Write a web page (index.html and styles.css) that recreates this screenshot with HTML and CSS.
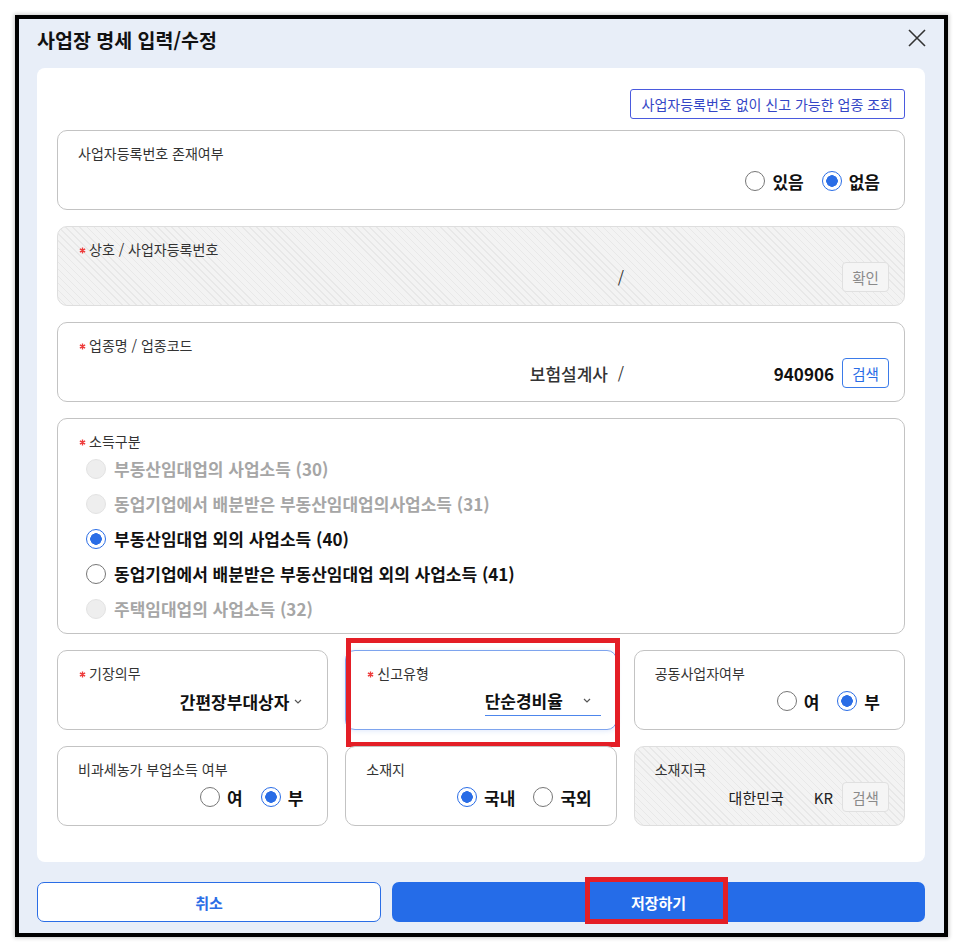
FILE: index.html
```html
<!DOCTYPE html>
<html lang="ko">
<head>
<meta charset="utf-8">
<title>사업장 명세 입력/수정</title>
<link rel="stylesheet" href="styles.css">
</head>
<body>
<div class="modal">
  <header class="modal-head">
    <h1 class="modal-title">사업장 명세 입력/수정</h1>
    <button class="close-btn" type="button" aria-label="닫기">
      <svg width="18" height="18" viewBox="0 0 18 18"><path d="M1 1 L17 17 M17 1 L1 17" stroke="#333" stroke-width="1.6" fill="none"/></svg>
    </button>
  </header>

  <main class="panel">
    <div class="panel-top">
      <button class="link-btn" type="button">사업자등록번호 없이 신고 가능한 업종 조회</button>
    </div>

    <section class="field">
      <div class="field-label">사업자등록번호 존재여부</div>
      <div class="field-value">
        <label class="radio"><span class="dot"></span><span>있음</span></label>
        <label class="radio is-checked"><span class="dot"></span><span>없음</span></label>
      </div>
    </section>

    <section class="field is-disabled">
      <div class="field-label"><svg class="req" viewBox="0 0 8 8"><path d="M4 0.5 V7.5 M1 2.2 L7 5.8 M7 2.2 L1 5.8" stroke="#ee3b3b" stroke-width="1.5"/></svg>상호 / 사업자등록번호</div>
      <div class="field-value code-row">
        <span class="code-name"></span>
        <span class="code-slash">/</span>
        <span class="code-num"></span>
        <button class="mini-btn is-muted" type="button">확인</button>
      </div>
    </section>

    <section class="field">
      <div class="field-label"><svg class="req" viewBox="0 0 8 8"><path d="M4 0.5 V7.5 M1 2.2 L7 5.8 M7 2.2 L1 5.8" stroke="#ee3b3b" stroke-width="1.5"/></svg>업종명 / 업종코드</div>
      <div class="field-value code-row">
        <span class="code-name">보험설계사</span>
        <span class="code-slash">/</span>
        <span class="code-num">940906</span>
        <button class="mini-btn" type="button">검색</button>
      </div>
    </section>

    <section class="field field-list">
      <div class="field-label"><svg class="req" viewBox="0 0 8 8"><path d="M4 0.5 V7.5 M1 2.2 L7 5.8 M7 2.2 L1 5.8" stroke="#ee3b3b" stroke-width="1.5"/></svg>소득구분</div>
      <ul class="option-list">
        <li class="option is-off"><span class="dot"></span>부동산임대업의 사업소득 (30)</li>
        <li class="option is-off"><span class="dot"></span>동업기업에서 배분받은 부동산임대업의사업소득 (31)</li>
        <li class="option is-checked"><span class="dot"></span>부동산임대업 외의 사업소득 (40)</li>
        <li class="option"><span class="dot"></span>동업기업에서 배분받은 부동산임대업 외의 사업소득 (41)</li>
        <li class="option is-off"><span class="dot"></span>주택임대업의 사업소득 (32)</li>
      </ul>
    </section>

    <div class="field-grid">
      <section class="field">
        <div class="field-label"><svg class="req" viewBox="0 0 8 8"><path d="M4 0.5 V7.5 M1 2.2 L7 5.8 M7 2.2 L1 5.8" stroke="#ee3b3b" stroke-width="1.5"/></svg>기장의무</div>
        <div class="field-value">
          <span class="select">간편장부대상자<svg class="chev" viewBox="0 0 8 5"><path d="M1 1 L4 4 L7 1" stroke="#555" stroke-width="1.2" fill="none"/></svg></span>
        </div>
      </section>

      <section class="field is-focused">
        <div class="field-label"><svg class="req" viewBox="0 0 8 8"><path d="M4 0.5 V7.5 M1 2.2 L7 5.8 M7 2.2 L1 5.8" stroke="#ee3b3b" stroke-width="1.5"/></svg>신고유형</div>
        <div class="field-value">
          <span class="select is-open">단순경비율<svg class="chev" viewBox="0 0 8 5"><path d="M1 1 L4 4 L7 1" stroke="#555" stroke-width="1.2" fill="none"/></svg></span>
        </div>
        <span class="mark mark-type"></span>
      </section>

      <section class="field">
        <div class="field-label">공동사업자여부</div>
        <div class="field-value">
          <label class="radio"><span class="dot"></span><span>여</span></label>
          <label class="radio is-checked"><span class="dot"></span><span>부</span></label>
        </div>
      </section>

      <section class="field">
        <div class="field-label">비과세농가 부업소득 여부</div>
        <div class="field-value">
          <label class="radio"><span class="dot"></span><span>여</span></label>
          <label class="radio is-checked"><span class="dot"></span><span>부</span></label>
        </div>
      </section>

      <section class="field">
        <div class="field-label">소재지</div>
        <div class="field-value">
          <label class="radio is-checked"><span class="dot"></span><span>국내</span></label>
          <label class="radio"><span class="dot"></span><span>국외</span></label>
        </div>
      </section>

      <section class="field is-disabled">
        <div class="field-label">소재지국</div>
        <div class="field-value">
          <span class="country">대한민국</span>
          <span class="country-code">KR</span>
          <button class="mini-btn is-muted" type="button">검색</button>
        </div>
      </section>
    </div>
  </main>

  <footer class="modal-actions">
    <button class="btn btn-cancel" type="button">취소</button>
    <button class="btn btn-save" type="button">저장하기<span class="mark mark-save"></span></button>
  </footer>
</div>
</body>
</html>
```
FILE: styles.css
```css
* {
  box-sizing: border-box;
}

html,
body {
  margin: 0;
  padding: 0;
  background: #fff;
}

body {
  font-family: "Noto Sans CJK KR", "Noto Sans", sans-serif;
  color: #222;
}

button {
  font-family: inherit;
  cursor: pointer;
}

/* dialog frame */
.modal {
  margin: 15px;
  width: 933px;
  height: 922px;
  border: 4px solid #000;
  background: #e8eef8;
  display: flex;
  flex-direction: column;
  padding: 0 19px 11px 18px;
  box-shadow: 0 0 4px 1px rgba(0, 0, 0, 0.22);
}

.modal-head {
  height: 49px;
  flex: none;
  display: flex;
  align-items: center;
  justify-content: space-between;
  padding-bottom: 7px;
}

.modal-title {
  margin: 0;
  font-size: 19.5px;
  line-height: 26px;
  font-weight: 700;
  color: #111;
}

.close-btn {
  width: 24px;
  height: 24px;
  padding: 0;
  margin: -5px -4px 0 0;
  border: 0;
  background: transparent;
  display: flex;
  align-items: center;
  justify-content: center;
}

/* white content panel */
.panel {
  flex: 1;
  background: #fff;
  border-radius: 8px;
  padding: 21px 20px 36px;
}

.panel-top {
  display: flex;
  justify-content: flex-end;
}

.link-btn {
  height: 30px;
  padding: 0 11px;
  border: 1px solid #4a5ade;
  border-radius: 3px;
  background: #fff;
  color: #3446c6;
  font-size: 14px;
}

/* form field cards */
.field {
  position: relative;
  height: 80px;
  margin-top: 16px;
  padding: 12px 15px 0 20px;
  border: 1px solid #c3c3c3;
  border-radius: 10px;
  background: #fff;
}

.panel-top + .field {
  margin-top: 11px;
}

.field.is-disabled {
  border-color: #dedede;
  background: repeating-linear-gradient(45deg, #e8e8e8 0 1px, #f3f3f3 1px 5px);
}

.field.is-focused {
  border-color: #7ea4ee;
  box-shadow: 0 1px 5px rgba(40, 100, 220, 0.15);
}

.field-label {
  display: flex;
  align-items: center;
  font-size: 14px;
  line-height: 20px;
  color: #333;
}

.req {
  width: 7px;
  height: 7px;
  margin: 2px 3px 0 1px;
  flex: none;
}

.field-value {
  margin-top: 3px;
  height: 30px;
  display: flex;
  align-items: center;
  justify-content: flex-end;
}

/* name / code rows */
.code-row {
  justify-content: flex-start;
}

.code-name {
  flex: 1;
  text-align: right;
  font-size: 17px;
  font-weight: 500;
  color: #333;
}

.code-slash {
  width: 26px;
  text-align: center;
  font-size: 16px;
  color: #333;
}

.code-num {
  width: 200px;
  text-align: right;
  font-size: 17px;
  font-weight: 700;
  color: #111;
}

.mini-btn {
  width: 47px;
  height: 30px;
  margin-left: 8px;
  padding: 0;
  border: 1px solid #3b7be9;
  border-radius: 4px;
  background: #fff;
  color: #2a6de6;
  font-size: 14.5px;
}

.mini-btn.is-muted {
  border-color: #e0e0e0;
  background: #f5f5f5;
  color: #8a8a8a;
}

.country {
  font-size: 15px;
  color: #222;
}

.country-code {
  margin-left: 30px;
  font-size: 15px;
  color: #222;
}

.field-value .country-code + .mini-btn {
  margin-left: 9px;
}

/* radios */
.radio {
  display: inline-flex;
  align-items: center;
  gap: 7px;
  padding-right: 9px;
  font-size: 17px;
  font-weight: 700;
  color: #111;
}

.radio + .radio {
  margin-left: 9px;
}

.dot {
  width: 20px;
  height: 20px;
  flex: none;
  border-radius: 50%;
  border: 1px solid #777;
  background: #fff;
}

.is-checked > .dot {
  border-color: #2a6de6;
  background: radial-gradient(circle, #2a6de6 0 5.5px, #fff 6px);
}

/* income type list */
.field-list {
  height: auto;
  padding-bottom: 7px;
}

.option-list {
  list-style: none;
  margin: 0;
  padding: 0 0 0 8px;
}

.option {
  height: 35px;
  display: flex;
  align-items: center;
  gap: 8px;
  font-size: 17px;
  font-weight: 700;
  color: #111;
}

.option.is-off {
  color: #a6a6a6;
}

.option.is-off > .dot {
  border-color: #e3e3e3;
  background: #eeeeee;
}

/* three column block */
.field-grid {
  display: grid;
  grid-template-columns: repeat(3, 1fr);
  gap: 16px 17px;
  margin-top: 16px;
}

.field-grid .field {
  margin-top: 0;
}

.select {
  display: inline-flex;
  align-items: center;
  justify-content: space-between;
  gap: 5px;
  min-width: 116px;
  height: 30px;
  padding-right: 10px;
  font-size: 17px;
  font-weight: 700;
  color: #111;
}

.select.is-open {
  border-bottom: 1.5px solid #4d86ec;
}

.chev {
  width: 8px;
  height: 5px;
  flex: none;
}

/* footer buttons */
.modal-actions {
  flex: none;
  display: flex;
  gap: 11px;
  margin-top: 20px;
  height: 40px;
}

.btn {
  height: 40px;
  border-radius: 7px;
  font-size: 15px;
  font-weight: 700;
}

.btn-cancel {
  width: 344px;
  border: 1px solid #2a6de6;
  background: #fff;
  color: #2a6de6;
}

.btn-save {
  position: relative;
  flex: 1;
  border: 0;
  background: #256ce8;
  color: #fff;
}

/* red highlight frames */
.mark {
  position: absolute;
  border: 5px solid #e41e26;
  pointer-events: none;
}

.mark-type {
  left: 0;
  top: -13px;
  width: 274px;
  height: 109px;
}

.mark-save {
  left: 193px;
  top: -5px;
  width: 143px;
  height: 47px;
}
```
